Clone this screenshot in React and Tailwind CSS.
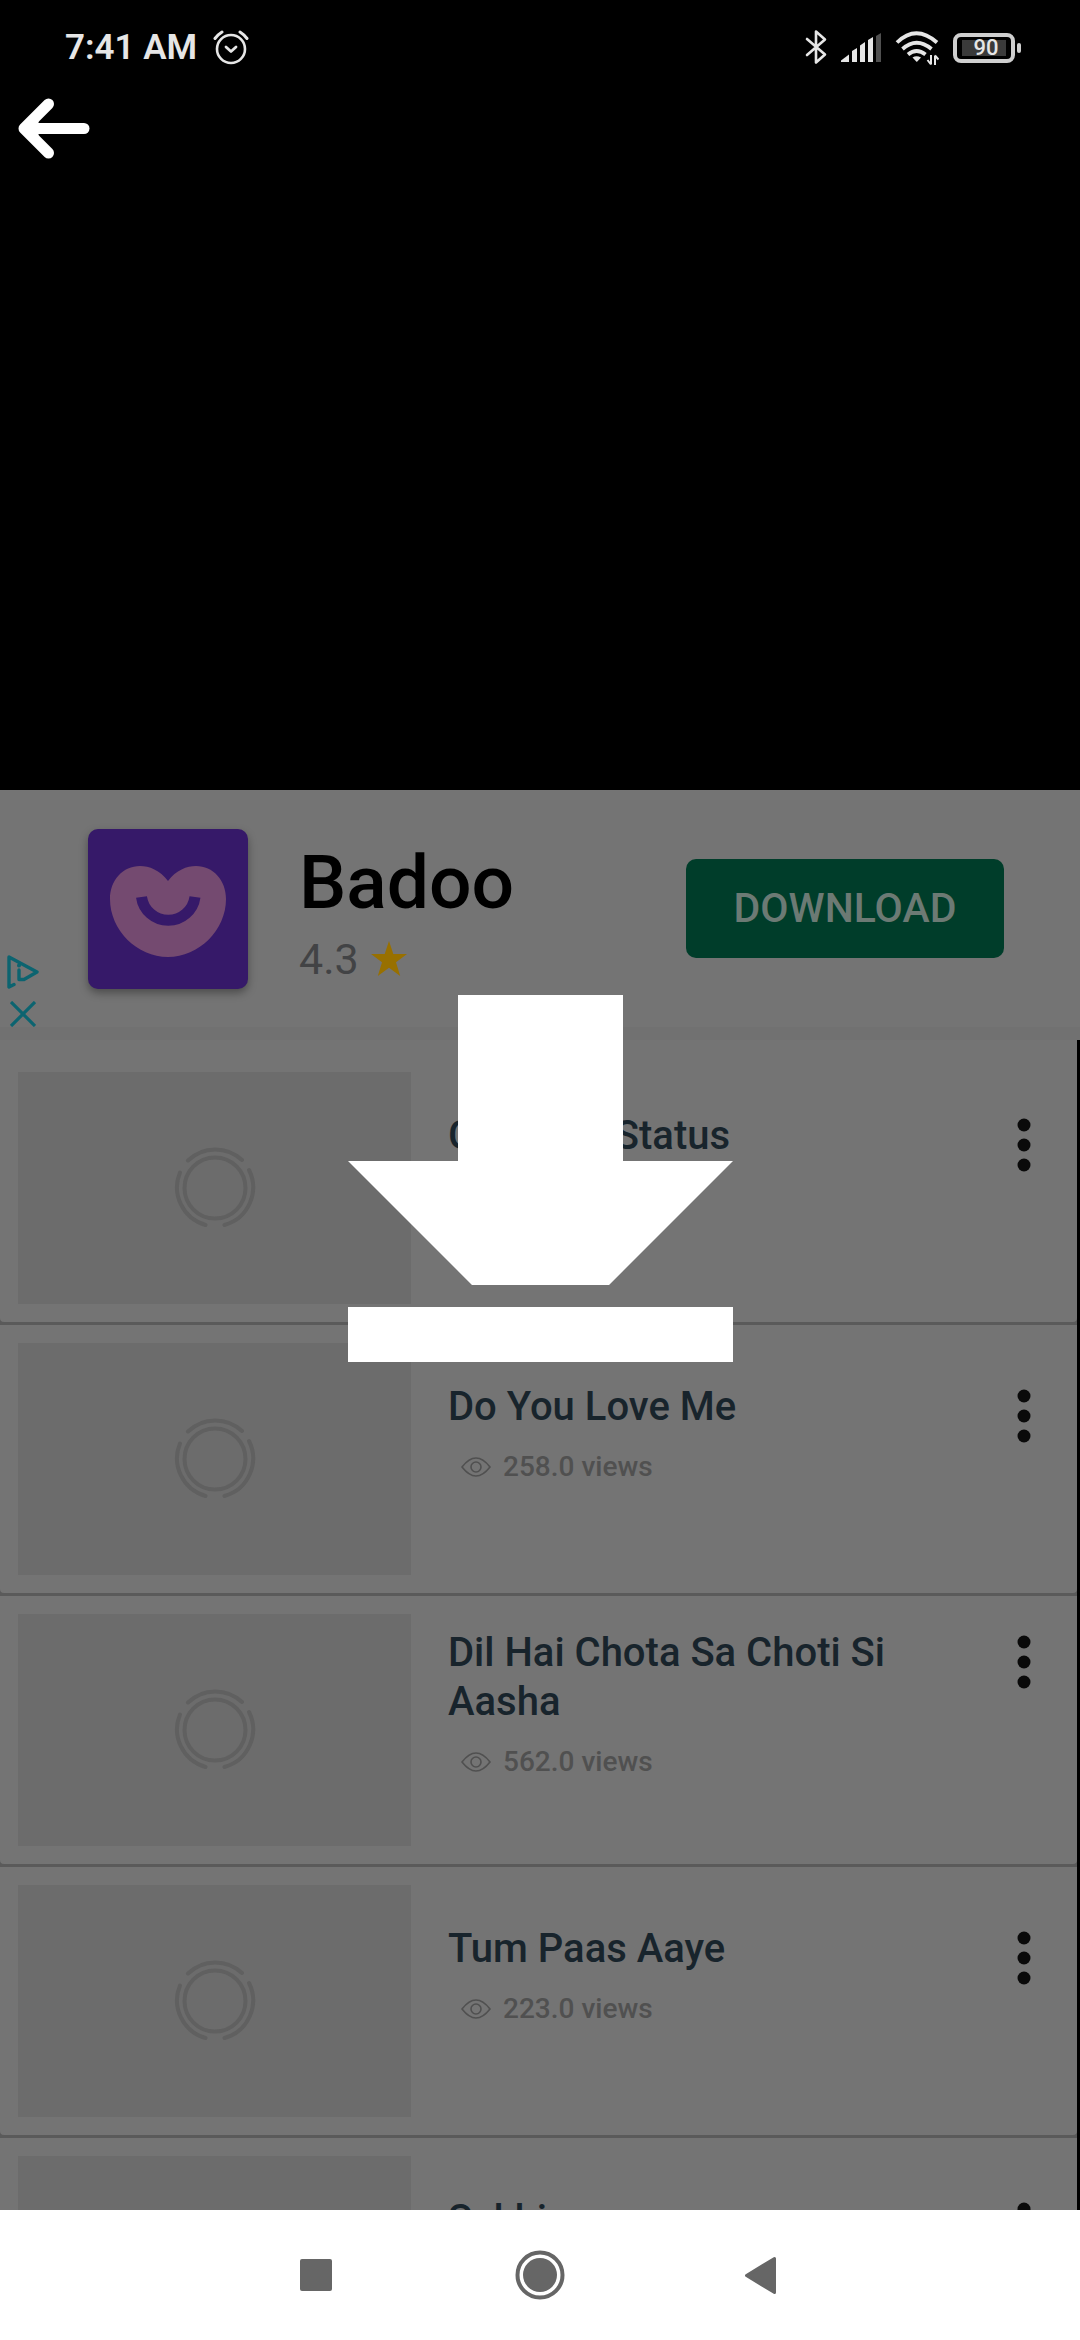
import React from 'react';

const videos = [
  { id: 1, title: 'Ganesha Status', views: '341.0' },
  { id: 2, title: 'Do You Love Me', views: '258.0' },
  { id: 3, title: 'Dil Hai Chota Sa Choti Si Aasha', views: '562.0' },
  { id: 4, title: 'Tum Paas Aaye', views: '223.0' },
  { id: 5, title: 'Sakhi', views: '187.0' },
];

const StatusBar = () => (
  <div className="flex h-24 items-center justify-between pl-[65px] pr-[59px] text-[#e6e6e6]">
    <div className="flex items-center gap-4">
      <span className="text-[35px] font-semibold leading-[40px]">7:41 AM</span>
      <svg className="size-9" viewBox="0 0 36 36" fill="none" stroke="currentColor" strokeLinecap="round">
        <circle cx="18" cy="19" r="14" strokeWidth="2.6" />
        <path d="M13 17l5 4.500 5-4.500" strokeWidth="2.800" strokeLinejoin="round" />
        <path d="M2 8.500q3-4 7-6.500M34 8.500q-3-4-7-6.500" strokeWidth="3" />
      </svg>
    </div>

    <div className="flex items-center gap-[14px]">
      <svg className="h-9 w-[22px]" viewBox="0 0 22 36" fill="none" stroke="currentColor" strokeWidth="2.6">
        <path d="M2 9l18 15.500-9 8V1.500l9 8L2 25" strokeLinejoin="round" strokeLinecap="round" />
      </svg>
      <svg className="h-[30px] w-10" viewBox="0 0 40 30" fill="currentColor">
        <path d="M0 29v-1.500l8-6V29z" />
        <path d="M11 18l5-3v14h-5zM19 12.500l5-3.500v20h-5zM27 7l5-3v25h-5z" />
        <path d="M35 3l5-3v29h-5z" opacity="0.35" />
      </svg>
      <svg className="h-9 w-[44px]" viewBox="0 0 44 36" fill="none" stroke="currentColor" strokeWidth="3.800">
        <path d="M2 12.500q19-18.500 40 0" />
        <path d="M7.500 19q14-12.500 29 0" />
        <path d="M13 24.500q8.500-7 17.500 0" />
        <path d="M17.500 27.500q4-2.500 8.500 0l-4.200 4.500z" fill="currentColor" stroke="none" />
        <path d="M36 25v9.500M36 34.500l-3.500-4.500M40 35v-9.500M40 25.500l3.500 4" strokeWidth="2" />
      </svg>
      <div className="flex items-center gap-[2px]">
        <div className="flex h-[30px] w-[62px] items-center justify-center rounded-lg border-4 border-[#cfcfcf]">
          <div className="flex h-4 w-11 items-center justify-center bg-[#3a3a3a] pl-1 text-[22px] font-medium leading-4">
            90
          </div>
        </div>
        <div className="h-[10px] w-1 rounded-sm bg-[#cfcfcf]" />
      </div>
    </div>
  </div>
);

const AdBanner = () => (
  <section className="flex shrink-0 items-center border-b-[13px] border-[#717171] bg-[#747474]">
    <div className="flex w-[88px] flex-col gap-3 self-end pl-[7px] text-[#0c6470]">
      <button type="button" aria-label="Ad choices">
        <svg className="h-[34px] w-8" viewBox="0 0 32 34" fill="none" stroke="currentColor" strokeLinejoin="round" strokeLinecap="round">
          <path d="M7 29.500l-5 2.500V2l28 15-13 7.500" strokeWidth="3.400" />
          <path d="M12 15v9.500h4" strokeWidth="3.400" />
          <circle cx="12" cy="10.500" r="1" strokeWidth="2" />
        </svg>
      </button>
      <button type="button" aria-label="Close ad" className="pl-[3px]">
        <svg className="size-[26px]" viewBox="0 0 26 26" fill="none" stroke="currentColor" strokeWidth="3.200">
          <path d="M1 1l24 24M25 1L1 25" />
        </svg>
      </button>
    </div>

    <div className="mb-[38px] mt-[39px] size-40 rounded-[10px] bg-[#361969] shadow-[0_4px_8px_rgba(0,0,0,0.35)]">
      <svg className="size-40" viewBox="0 0 160 160">
        <path
          d="M80 52C88 41 99 37 108 37c17 0 30 14 30 33 0 31-27 58-58 58S22 101 22 70c0-19 13-33 30-33 9 0 20 4 28 15z"
          fill="#744a70"
        />
        <path d="M53.500 68a27 27 0 0 0 53.500 0" fill="none" stroke="#361969" strokeWidth="11" />
      </svg>
    </div>

    <div className="mt-4 pl-[51px]">
      <h2 className="text-[75px] font-medium leading-[84px] text-black">Badoo</h2>
      <div className="flex items-center gap-3 text-[#424345]">
        <span className="text-[43px] leading-[70px]">4.3</span>
        <svg className="size-9" viewBox="0 0 36 36" fill="#987000">
          <path d="M18 0l4.300 13H36L25 21.300 29.200 35 18 26.800 6.800 35 11 21.300 0 13h13.700z" />
        </svg>
      </div>
    </div>

    <button
      type="button"
      className="ml-auto mr-[76px] h-[99px] w-[318px] rounded-[10px] bg-[#003d2a] text-[41px] font-medium text-[#6c7a74]"
    >
      DOWNLOAD
    </button>
  </section>
);

const Placeholder = () => (
  <div className="flex h-[232px] w-[393px] shrink-0 items-center justify-center bg-[#6c6c6c]">
    <svg className="size-[84px]" viewBox="-42 -42 84 84" fill="none" stroke="#606060" strokeWidth="4" strokeLinecap="round">
      <circle r="30.500" />
      <path d="M-27-27.500A39 39 0 0 1 27-28M34-18A39 39 0 0 1 9.500 37M-9.500 37A39 39 0 0 1-35-15.500" />
    </svg>
  </div>
);

const VideoCard = ({ video }) => (
  <li className="flex shrink-0 items-center rounded-b-[4px] bg-[#747474] p-[18px] pr-[46px]">
    <Placeholder />
    <div className="flex flex-1 items-start pb-[52px] pl-[37px]">
      <div className="flex-1 pr-[60px]">
        <h3 className="text-[40px] font-medium leading-[49px] text-[#18242c]">{video.title}</h3>
        <p className="mt-[18px] flex items-center gap-3 pl-[13px] text-[28px] font-medium leading-[36px] text-[#505050]">
          <svg className="h-5 w-[30px]" viewBox="0 0 30 20" fill="none" stroke="currentColor" strokeWidth="1.600">
            <path d="M1 10Q8 1 15 1t14 9q-7 9-14 9T1 10z" />
            <circle cx="15" cy="10" r="5" />
          </svg>
          {video.views} views
        </p>
      </div>
      <button type="button" aria-label="More options" className="mt-[6px]">
        <svg className="h-14 w-[14px]" viewBox="0 0 14 56" fill="#0a0a0a">
          <circle cx="7" cy="8" r="6.500" />
          <circle cx="7" cy="28" r="6.500" />
          <circle cx="7" cy="48" r="6.500" />
        </svg>
      </button>
    </div>
  </li>
);

const NavBar = () => (
  <nav className="flex h-[130px] shrink-0 items-center justify-center gap-[166px] bg-white">
    <button type="button" aria-label="Recent apps">
      <svg className="size-14" viewBox="0 0 56 56" fill="#666">
        <rect x="10" y="12" width="32" height="32" rx="2" />
      </svg>
    </button>
    <button type="button" aria-label="Home">
      <svg className="size-14" viewBox="0 0 56 56" fill="#666">
        <circle cx="28" cy="28" r="17" />
        <circle cx="28" cy="28" r="22.500" fill="none" stroke="#666" strokeWidth="4" />
      </svg>
    </button>
    <button type="button" aria-label="Back">
      <svg className="size-14" viewBox="0 0 56 56" fill="#666" stroke="#666" strokeWidth="3" strokeLinejoin="round">
        <path d="M12.500 28.500L40.500 11.500v34z" />
      </svg>
    </button>
  </nav>
);

export default function App() {
  return (
    <div
      className="relative flex h-screen flex-col overflow-hidden bg-black"
      style={{ fontFamily: 'Roboto, "Noto Sans", sans-serif' }}
    >
      {/* Player area */}
      <header className="aspect-[108/79] w-full shrink-0">
        <StatusBar />
        <button type="button" aria-label="Go back" className="block pl-[18px]">
          <svg className="h-[64px] w-[72px]" viewBox="0 0 72 64" fill="none" stroke="#fff" strokeLinecap="round" strokeLinejoin="round">
            <path d="M30.500 8L6 32.500 30.500 57" strokeWidth="11" />
            <path d="M10 32.500h56" strokeWidth="11" />
            <path d="M6 32.500l14-11v22z" fill="#fff" />
          </svg>
        </button>
      </header>

      <AdBanner />

      {/* Suggested videos */}
      <main className="min-h-0 flex-1 overflow-hidden pr-[3px]">
        <ul className="flex flex-col gap-[3px] bg-[#5a5a5a]">
          <li aria-hidden="true" className="-mb-[3px] h-[14px] bg-[#747474]" />
          {videos.map((video) => (
            <VideoCard key={video.id} video={video} />
          ))}
        </ul>
      </main>

      <NavBar />

      {/* Download overlay */}
      <div className="pointer-events-none absolute inset-0 flex items-center justify-center pt-4">
        <svg className="h-[367px] w-[385px]" viewBox="0 0 385 367" fill="#fff">
          <path d="M110 0h165v166h110L261 290H124L0 166h110z" />
          <path d="M0 312h385v55H0z" />
        </svg>
      </div>
    </div>
  );
}
